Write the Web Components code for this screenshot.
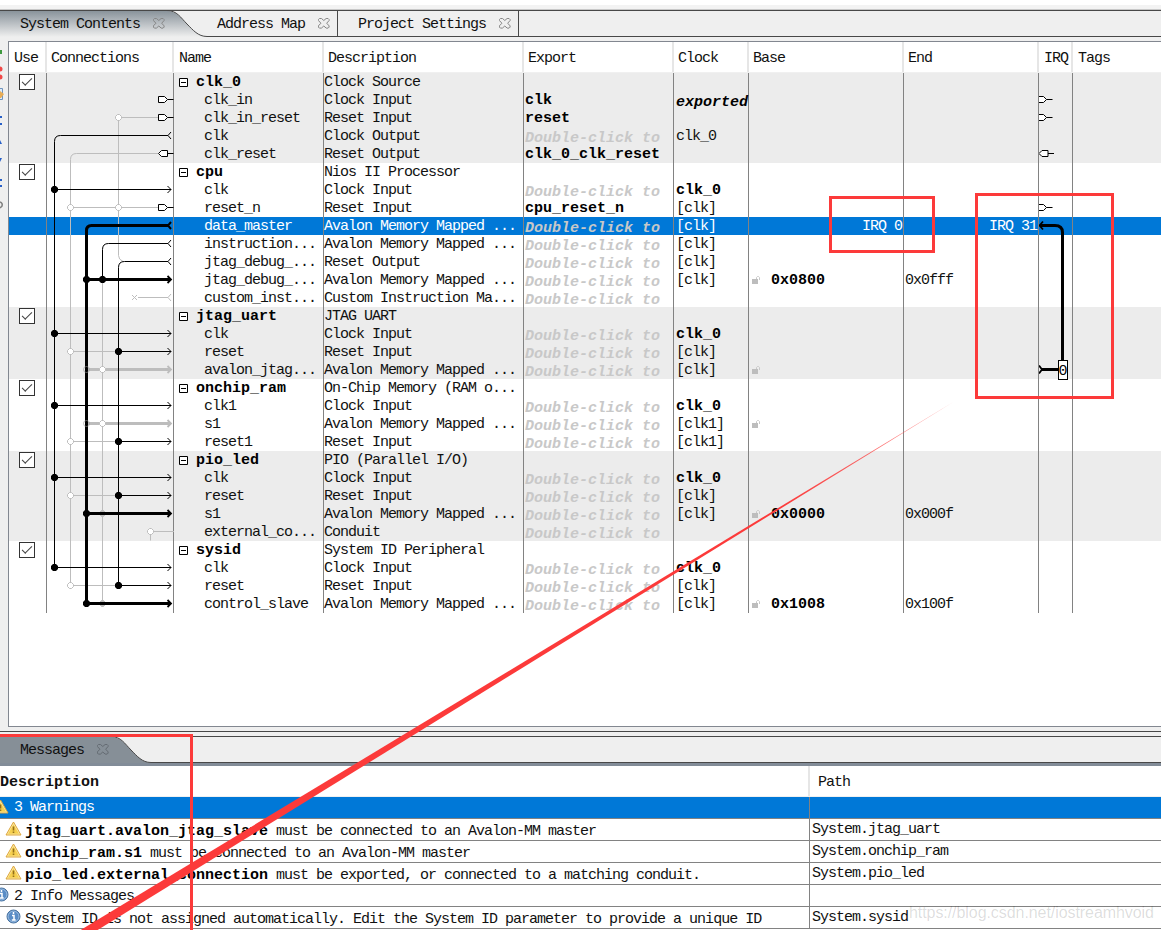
<!DOCTYPE html>
<html lang="en">
<head>
<meta charset="utf-8">
<title>System Contents</title>
<style>
    html, body {
        margin: 0;
        height: 100%;
        overflow: hidden;
        background: #fff;
    }
    body {
        font: 15px/18px "Liberation Mono", monospace;
        letter-spacing: -1px;
        color: #111;
    }
</style>
</head>
<body>
<system-app></system-app>

<script>
const closeIcon = `
    <svg class="close" width="12" height="11" viewBox="0 0 12 11" fill="none">
        <path d="M1.5.5h2l2.3 2 2.3-2h2l1 1v1L8.7 5.2l2.4 2.7v1.2l-1 1H8.2L5.8 8 3.4 10.1h-2l-1-1V7.9l2.5-2.7L.4 2.5v-1z"/>
    </svg>`;

// One view tab; the active one gets the curved right edge
class ViewTab extends HTMLElement {
    constructor() {
        super();
        this.attachShadow({ mode: 'open' });
    }

    connectedCallback() {
        const curve = this.hasAttribute('active') ? `
            <svg class="curve" width="52" height="27" viewBox="0 0 52 27">
                <defs>
                    <linearGradient id="g" x1="0" y1="0" x2="0" y2="1">
                        <stop offset="0" stop-color="var(--tab-top)"/>
                        <stop offset="1" stop-color="var(--tab-bottom)"/>
                    </linearGradient>
                </defs>
                <path d="M0 1H2C12 1 16 8 22 14S33 26.5 42 26.5V27H0z" fill="url(#g)"/>
                <path d="M0 .5H2M42 26.5H52M2 .5H52" fill="none" stroke="#484848"/>
                <path d="M2 .5C12 .5 16 8 22 14S33 26.5 42 26.5" fill="none" stroke="#484848"/>
            </svg>` : '';

        this.shadowRoot.innerHTML = `
            <style>
                :host {
                    display: flex;
                    flex: none;
                    height: 27px;
                    box-sizing: border-box;
                    border-top: 1px solid #484848;
                    border-bottom: 1px solid #484848;
                    border-right: 1px solid #484848;
                    white-space: nowrap;
                    --tab-bottom: #efefef;
                }
                :host([active]) {
                    border: 0;
                }
                .body {
                    display: flex;
                    flex: 1;
                    box-sizing: border-box;
                    padding: 5px 0 0 var(--tab-pad, 20px);
                }
                :host([active]) .body {
                    border-top: 1px solid #484848;
                    background: linear-gradient(var(--tab-top), var(--tab-bottom));
                }
                .close {
                    flex: none;
                    margin: 2px 0 0 13px;
                    stroke: var(--close, #858585);
                }
                .curve {
                    flex: none;
                }
            </style>
            <div class="body"><slot></slot>${closeIcon}</div>${curve}
        `;
    }
}
customElements.define('view-tab', ViewTab);

class TabBar extends HTMLElement {
    constructor() {
        super();
        this.attachShadow({ mode: 'open' });
        this.shadowRoot.innerHTML = `
            <style>
                :host {
                    display: flex;
                    height: 27px;
                    background: #efefef;
                    --tab-top: #89939b;
                }
                .rest {
                    flex: 1;
                    border-top: 1px solid #484848;
                    border-bottom: 1px solid #484848;
                }
            </style>
            <slot></slot><div class="rest"></div>
        `;
    }
}
customElements.define('tab-bar', TabBar);

class CheckBox extends HTMLElement {
    constructor() {
        super();
        this.attachShadow({ mode: 'open' });
        this.shadowRoot.innerHTML = `
            <style>
                :host {
                    display: flex;
                    justify-content: center;
                    flex: none;
                    width: 14px;
                    height: 14px;
                    border: 1px solid #333;
                    background: #fff;
                }
                .tick {
                    width: 9px;
                    height: 4px;
                    margin-top: 3px;
                    border: solid #444;
                    border-width: 0 0 1.5px 1.5px;
                    transform: rotate(-45deg);
                }
            </style>
            <span class="tick"></span>
        `;
    }
}
customElements.define('check-box', CheckBox);

// exp '?' = double-click placeholder
const rows = [
    { group: true, name: 'clk_0', desc: 'Clock Source' },
    { name: 'clk_in', desc: 'Clock Input', exp: 'clk', clock: 'exported' },
    { name: 'clk_in_reset', desc: 'Reset Input', exp: 'reset' },
    { name: 'clk', desc: 'Clock Output', exp: '?', clock: 'clk_0', plain: true },
    { name: 'clk_reset', desc: 'Reset Output', exp: 'clk_0_clk_reset' },
    { group: true, name: 'cpu', desc: 'Nios II Processor' },
    { name: 'clk', desc: 'Clock Input', exp: '?', clock: 'clk_0' },
    { name: 'reset_n', desc: 'Reset Input', exp: 'cpu_reset_n', clock: '[clk]' },
    { name: 'data_master', desc: 'Avalon Memory Mapped ...', exp: '?', clock: '[clk]', irq: ['IRQ 0', 'IRQ 31'], selected: true },
    { name: 'instruction...', desc: 'Avalon Memory Mapped ...', exp: '?', clock: '[clk]' },
    { name: 'jtag_debug_...', desc: 'Reset Output', exp: '?', clock: '[clk]' },
    { name: 'jtag_debug_...', desc: 'Avalon Memory Mapped ...', exp: '?', clock: '[clk]', lock: true, base: '0x0800', end: '0x0fff' },
    { name: 'custom_inst...', desc: 'Custom Instruction Ma...', exp: '?' },
    { group: true, name: 'jtag_uart', desc: 'JTAG UART' },
    { name: 'clk', desc: 'Clock Input', exp: '?', clock: 'clk_0' },
    { name: 'reset', desc: 'Reset Input', exp: '?', clock: '[clk]' },
    { name: 'avalon_jtag...', desc: 'Avalon Memory Mapped ...', exp: '?', clock: '[clk]', lock: true },
    { group: true, name: 'onchip_ram', desc: 'On-Chip Memory (RAM o...' },
    { name: 'clk1', desc: 'Clock Input', exp: '?', clock: 'clk_0' },
    { name: 's1', desc: 'Avalon Memory Mapped ...', exp: '?', clock: '[clk1]', lock: true },
    { name: 'reset1', desc: 'Reset Input', exp: '?', clock: '[clk1]' },
    { group: true, name: 'pio_led', desc: 'PIO (Parallel I/O)' },
    { name: 'clk', desc: 'Clock Input', exp: '?', clock: 'clk_0' },
    { name: 'reset', desc: 'Reset Input', exp: '?', clock: '[clk]' },
    { name: 's1', desc: 'Avalon Memory Mapped ...', exp: '?', clock: '[clk]', lock: true, base: '0x0000', end: '0x000f' },
    { name: 'external_co...', desc: 'Conduit', exp: '?' },
    { group: true, name: 'sysid', desc: 'System ID Peripheral' },
    { name: 'clk', desc: 'Clock Input', exp: '?', clock: 'clk_0' },
    { name: 'reset', desc: 'Reset Input', exp: '?', clock: '[clk]' },
    { name: 'control_slave', desc: 'Avalon Memory Mapped ...', exp: '?', clock: '[clk]', lock: true, base: '0x1008', end: '0x100f' }
];

const columns = '38px 127px 150px 200px 150px 75px 155px 135px 34px 1fr';

class ComponentRow extends HTMLElement {
    constructor() {
        super();
        this.attachShadow({ mode: 'open' });
    }

    set row(r) {
        const minus = `
            <svg class="minus" width="9" height="9" viewBox="0 0 9 9" fill="#fff" stroke="#000">
                <path d="M.5.5h8v8h-8zM2 4.5h5"/>
            </svg>`;
        const lock = r.lock ? `
            <svg class="lock" width="8" height="8" viewBox="0 0 8 8">
                <path d="M0 3h6v5H0z" fill="#bdbdbd"/>
                <path d="M4.5 3V1.5l1-1h1l1 1V4" fill="none" stroke="#c8c8c8"/>
            </svg>` : '';
        const hint = r.exp === '?';
        const exported = r.clock === 'exported';
        const bold = (r.clock === 'clk_0' && !r.plain) || exported;
        const irq = r.irq || [];

        this.shadowRoot.innerHTML = `
            <style>
                :host {
                    display: grid;
                    grid-template-columns: ${columns};
                    height: 18px;
                    white-space: pre;
                }
                :host([shade]) {
                    background: #ececec;
                }
                :host([selected]) {
                    background: #0078d7;
                    color: #fff;
                }
                div {
                    box-sizing: border-box;
                    height: 18px;
                    padding: 1px 0 0;
                    border-right: 1px solid #828282;
                    line-height: 18px;
                }
                .use {
                    display: flex;
                    padding: 1px 0 0 10px;
                }
                .last {
                    border: 0;
                }
                .name {
                    padding-left: 30px;
                }
                .group {
                    display: flex;
                    padding-left: 5px;
                }
                .minus {
                    margin: 4px 8px 0 0;
                }
                .exp {
                    padding-left: 1px;
                }
                .clk {
                    padding-left: 2px;
                }
                b {
                    letter-spacing: 0;
                    color: #000;
                }
                .late {
                    padding-top: 4px;
                    font-style: italic;
                    line-height: 16px;
                }
                .hint b {
                    color: #c8c8c8;
                }
                .base {
                    display: flex;
                }
                .lock {
                    margin: 4px 11px 0 3px;
                }
                .end {
                    padding-left: 1px;
                }
                .irq {
                    display: block;
                    padding-right: 1px;
                    text-align: right;
                }
                svg {
                    display: block;
                    flex: none;
                }
            </style>
            <div class="use">${r.group ? '<check-box></check-box>' : ''}</div>
            <div></div>
            <div class="${r.group ? 'group' : 'name'}">${r.group ? `${minus}<b>${r.name}</b>` : r.name}</div>
            <div>${r.desc}</div>
            <div class="exp ${hint ? 'late hint' : ''}">${r.exp ? `<b>${hint ? 'Double-click to' : r.exp}</b>` : ''}</div>
            <div class="clk ${exported ? 'late' : ''}">${bold ? `<b>${r.clock}</b>` : r.clock || ''}</div>
            <div class="base ${irq.length ? 'irq' : ''}">${irq[0] || ''}${lock}${r.base ? `<b>${r.base}</b>` : ''}</div>
            <div class="end ${irq.length ? 'irq' : ''}">${irq[1] || r.end || ''}</div>
            <div></div>
            <div class="last"></div>
        `;
        this.toggleAttribute('selected', !!r.selected);
    }
}
customElements.define('component-row', ComponentRow);

// Wiring drawn over the rows
const rowY = (i) => 8.5 + 18 * i;
const gray = '#bdbdbd';

const line = (x1, x2, row, color = '#000', width = 1) =>
    `<path d="M${x1} ${rowY(row)}H${x2}" stroke="${color}" stroke-width="${width}" fill="none"/>`;

const arrow = (x, row, color = '#000', width = 1) =>
    line(x, width > 1 ? 170 : 171, row, color, width) +
    `<path d="M167.5 ${rowY(row) - 3.5}l3.5 3.5-3.5 3.5" stroke="${color}" stroke-width="${width > 1 ? 1.8 : 1}" fill="none"/>`;

const fork = (row, color = '#000', width = 1) =>
    `<path d="M171 ${rowY(row) - 3.5}l-3 3.5 3 3.5" stroke="${color}" stroke-width="${width}" fill="none"/>`;

const dot = (x, row, color = '#000') => {
    const y = rowY(row);
    return `<path d="M${x - 1.5} ${y - 3.5}h3l2 2v3l-2 2h-3l-2-2v-3z" fill="${color}"/>`;
};

const ring = (x, row, fill = '#fff') =>
    `<path d="M${x - 1} ${rowY(row) - 3}h2l2 2v2l-2 2h-2l-2-2v-2z" fill="${fill}" stroke="${gray}"/>`;

const input = (x, row) =>
    `<path d="M${x + .5} ${rowY(row) - 3}h6l3 3-3 3h-6zM${x + 9.5} ${rowY(row)}h6" fill="#fff" stroke="#000"/>`;

const output = (x, row) =>
    `<path d="M${x + 9.5} ${rowY(row) - 3}h-6l-3 3 3 3h6zM${x + 9.5} ${rowY(row)}h6" fill="#fff" stroke="#000"/>`;

const drawWires = () => {
    let s = '';
    // gray nets first
    s += `<path d="M158 ${rowY(4)}H76.5q-6 0-6 6V${rowY(28)}" fill="none" stroke="${gray}"/>`;
    s += `<path d="M118.5 ${rowY(2)}V${rowY(10) - 6}q0 4 4.5 6" fill="none" stroke="${gray}"/>`;
    s += `<path d="M102.5 ${rowY(11)}V${rowY(29)}" stroke="${gray}"/>`;
    s += line(118, 158, 2, gray) + line(70, 158, 7, gray);
    [15, 20, 23, 28].forEach((r) => { s += line(70, 118, r, gray); });
    [16, 19].forEach((r) => { s += arrow(86, r, gray, 3); });
    s += line(138, 168, 12, gray) + fork(12, gray);
    s += `<path d="M132 ${rowY(12) - 2.5}l5 5m0-5l-5 5" stroke="${gray}"/>`;
    s += `<path d="M150.5 ${rowY(26) - 9}V${rowY(25)}H174" fill="none" stroke="${gray}"/>`;

    // clock net
    s += `<path d="M168 ${rowY(3)}H60.5q-6 0-6 6V${rowY(27)}" fill="none" stroke="#000"/>` + fork(3);
    [6, 14, 18, 22, 27].forEach((r) => { s += arrow(54, r) + dot(54.5, r); });

    // data master
    s += `<path d="M168 ${rowY(8)}H91.5q-5 0-5 5V${rowY(29)}" fill="none" stroke="#000" stroke-width="3"/>` + fork(8, '#000', 2);
    [16, 19].forEach((r) => { s += `<circle cx="86.5" cy="${rowY(r)}" r="3" fill="none" stroke="#999" stroke-opacity=".6"/>`; });
    [11, 24, 29].forEach((r) => { s += dot(86.5, r); });

    // instruction master
    s += `<path d="M168 ${rowY(9)}H108.5q-6 0-6 6V${rowY(11)}" fill="none" stroke="#000"/>` + fork(9);
    [24, 29].forEach((r) => { s += ring(102.5, r, gray); });
    [11, 24, 29].forEach((r) => { s += arrow(86, r, '#000', 3); });
    s += dot(102.5, 11) + ring(102.5, 16) + ring(102.5, 19);

    // reset net
    s += `<path d="M168 ${rowY(10)}H124.5q-6 0-6 6V${rowY(28)}" fill="none" stroke="#000"/>` + fork(10);
    [15, 20, 23, 28].forEach((r) => { s += arrow(118, r) + dot(118.5, r) + ring(70.5, r); });
    s += ring(118.5, 2) + ring(70.5, 7) + ring(118.5, 7) + ring(150.5, 25);

    s += input(158, 1) + input(158, 2) + output(158, 4) + input(158, 7);
    return s;
};

const drawIrq = () => {
    const top = rowY(8);
    const bottom = rowY(16);
    return input(1037, 1) + input(1037, 2) + output(1038.5, 4) + input(1037, 7) + `
        <path d="M1040 ${top}H1055q7.5 0 7.5 7V${bottom - 9}" fill="none" stroke="#000" stroke-width="3"/>
        <path d="M1043 ${top - 4}l-3.5 4 3.5 4" fill="none" stroke="#000" stroke-width="1.8"/>
        <path d="M1042 ${bottom}h16" stroke="#000" stroke-width="3"/>
        <path d="M1039 ${bottom - 4}l3 4-3 4" fill="none" stroke="#000" stroke-width="1.8"/>
        <rect x="1058.5" y="${bottom - 9}" width="9" height="19" fill="#fff" stroke="#000"/>
        <text x="1058.5" y="${bottom + 5.5}" font-size="15" fill="#000">0</text>`;
};

class ConnectionWires extends HTMLElement {
    constructor() {
        super();
        this.attachShadow({ mode: 'open' });
        this.shadowRoot.innerHTML = `
            <style>
                :host {
                    display: block;
                }
                svg {
                    display: block;
                }
            </style>
            <svg width="1152" height="540" viewBox="9 0 1152 540">
                <g>${drawWires()}</g>
                <svg x="1039" y="0" width="60" height="540" viewBox="1039 0 60 540">${drawIrq()}</svg>
            </svg>
        `;
    }
}
customElements.define('connection-wires', ConnectionWires);

class ComponentTable extends HTMLElement {
    constructor() {
        super();
        this.attachShadow({ mode: 'open' });
        const heads = ['Use', 'Connections', 'Name', 'Description', 'Export', 'Clock', 'Base', 'End', 'IRQ', 'Tags'];
        this.shadowRoot.innerHTML = `
            <style>
                :host {
                    display: block;
                    flex: 1;
                    border: 1px solid #828790;
                    border-right: 0;
                    background: #fff;
                }
                header {
                    display: grid;
                    grid-template-columns: ${columns};
                    height: 31px;
                    box-sizing: border-box;
                    border-bottom: 1px solid #f0f0f0;
                }
                header span {
                    padding: 8px 0 0 4px;
                    border-right: 2px solid #e6e6e6;
                    white-space: nowrap;
                }
                header .wide {
                    padding-left: 5px;
                }
                header span:last-child {
                    border: 0;
                }
                .rows {
                    position: relative;
                }
                connection-wires {
                    position: absolute;
                    inset: 0;
                }
            </style>
            <header>${heads.map((h) => `<span class="${['Use', 'Name', 'IRQ', 'Tags'].includes(h) ? 'wide' : ''}">${h}</span>`).join('')}</header>
            <div class="rows"></div>
        `;

        const body = this.shadowRoot.querySelector('.rows');
        let group = 0;
        rows.forEach((r) => {
            if (r.group) group++;
            const el = document.createElement('component-row');
            el.row = r;
            el.toggleAttribute('shade', group % 2 === 1);
            body.append(el);
        });
        body.append(document.createElement('connection-wires'));
    }
}
customElements.define('component-table', ComponentTable);

// Clipped left toolbar, only the icons' right edges are visible
class SideStrip extends HTMLElement {
    constructor() {
        super();
        this.attachShadow({ mode: 'open' });
        this.shadowRoot.innerHTML = `
            <style>
                :host {
                    display: block;
                    width: 8px;
                }
            </style>
            <svg width="8" height="190" viewBox="0 37 8 190">
                <path d="M0 50h2v4H0z" fill="#3f9a3f"/>
                <circle cx="0" cy="69" r="2.5" fill="#f04848"/>
                <circle cx="0" cy="77" r="2.5" fill="#f04848"/>
                <path d="M0 88.5h2.5v11H0" fill="#dcebfa" stroke="#6f93bd"/>
                <path d="M0 91l4 3-3 4H0z" fill="#e8ac55"/>
                <path d="M0 117h2M0 124h2M0 180h2M0 186h2" stroke="#2860c8" stroke-width="2"/>
                <path d="M0 140l2 4H0zM0 158h2l-2 4z" fill="#2860c8"/>
                <path d="M0 202q3 1 2 4l-2 2" fill="none" stroke="#808080" stroke-width="1.5"/>
            </svg>
        `;
    }
}
customElements.define('side-strip', SideStrip);

const icons = {
    warning: `
        <svg width="17" height="15" viewBox="0 0 17 15">
            <path d="M8.5 1L16 14H1z" fill="#fbe9a6" stroke="#dda63c" stroke-linejoin="round"/>
            <path d="M8.5 3.5L14 12.8H3z" fill="#f6cf4e"/>
            <path d="M8.5 5.5v4M8.5 10.5v1.5" stroke="#94701c" stroke-width="1.6"/>
        </svg>`,
    info: `
        <svg width="15" height="15" viewBox="0 0 15 15">
            <circle cx="7.5" cy="7.5" r="6.5" fill="#5a8dc6" stroke="#47719f"/>
            <circle cx="7.5" cy="7.5" r="5.4" fill="none" stroke="#a9c6e5" stroke-width=".8"/>
            <path d="M7.5 3v2M6 6.5h2V11M5.8 11h3.9" fill="none" stroke="#fff" stroke-width="1.5"/>
        </svg>`
};

class MessageRow extends HTMLElement {
    constructor() {
        super();
        this.attachShadow({ mode: 'open' });
    }

    connectedCallback() {
        this.shadowRoot.innerHTML = `
            <style>
                :host {
                    display: grid;
                    grid-template-columns: 810px 1fr;
                    height: 22px;
                    box-sizing: border-box;
                    border-bottom: 1px solid #828282;
                    white-space: pre;
                }
                :host([selected]) {
                    background: #0078d7;
                    color: #fff;
                }
                .text {
                    display: flex;
                    padding: 4px 0 0 25px;
                    border-right: 1px solid #828282;
                }
                :host([top]) .text {
                    padding: 2px 0 0 14px;
                }
                :host([top][icon="info"]) .text {
                    padding-top: 3px;
                }
                .path {
                    padding: 2px 0 0 2px;
                }
                svg {
                    flex: none;
                    margin: -2px 3px 0 -20px;
                }
                :host([icon="info"]) svg {
                    margin: -2px 4px 0 -19px;
                }
                :host([top]) svg {
                    margin: 0 5px 0 -22px;
                }
                :host([top][icon="info"]) svg {
                    margin: -1px 5px 0 -20px;
                }
                ::slotted(b) {
                    letter-spacing: 0;
                    color: #000;
                }
            </style>
            <div class="text">${icons[this.getAttribute('icon')]}<span><slot></slot></span></div>
            <div class="path"><slot name="path"></slot></div>
        `;
    }
}
customElements.define('message-row', MessageRow);

class MessageList extends HTMLElement {
    constructor() {
        super();
        this.attachShadow({ mode: 'open' });
        this.shadowRoot.innerHTML = `
            <style>
                :host {
                    display: block;
                    flex: none;
                    height: 167px;
                    border-top: 3px solid #828c98;
                    background: #fff;
                    overflow: hidden;
                }
                header {
                    display: grid;
                    grid-template-columns: 810px 1fr;
                    height: 31px;
                    box-sizing: border-box;
                    border-bottom: 1px solid #f0f0f0;
                }
                header span {
                    padding: 8px 0 0 8px;
                }
                header .first {
                    padding-left: 0;
                    border-right: 2px solid #e6e6e6;
                    font-weight: bold;
                    letter-spacing: 0;
                }
            </style>
            <header><span class="first">Description</span><span>Path</span></header>
            <slot></slot>
        `;
    }
}
customElements.define('message-list', MessageList);

// Red marks and the faint site address on top of everything
class MarkLayer extends HTMLElement {
    constructor() {
        super();
        this.attachShadow({ mode: 'open' });
        this.shadowRoot.innerHTML = `
            <style>
                :host {
                    display: block;
                    position: absolute;
                    inset: 0;
                    letter-spacing: 0;
                }
            </style>
            <svg width="1161" height="930" viewBox="0 0 1161 930">
                <defs>
                    <linearGradient id="fade" gradientUnits="userSpaceOnUse" x1="780" y1="508" x2="955" y2="401">
                        <stop offset="0" stop-color="#fc3a3a"/>
                        <stop offset="1" stop-color="#fc3a3a" stop-opacity=".5"/>
                    </linearGradient>
                </defs>
                <text x="909" y="918" font-family="Liberation Sans, sans-serif" font-size="16"
                    textLength="245" fill="#000" fill-opacity=".14">https://blog.csdn.net/iostreamhvoid</text>
                <g fill="none" stroke="#fc3a3a" stroke-width="3">
                    <rect x="830.5" y="197.5" width="103" height="54"/>
                    <rect x="976.5" y="194.5" width="136" height="203"/>
                    <path d="M0 735.5H191.5V930"/>
                </g>
                <path d="M955 401L79 931H96z" fill="url(#fade)"/>
            </svg>
        `;
    }
}
customElements.define('mark-layer', MarkLayer);

class SystemApp extends HTMLElement {
    constructor() {
        super();
        this.attachShadow({ mode: 'open' });
        this.shadowRoot.innerHTML = `
            <style>
                :host {
                    display: flex;
                    flex-direction: column;
                    position: relative;
                    width: 1161px;
                    height: 930px;
                    overflow: hidden;
                }
                .top {
                    height: 10px;
                    flex: none;
                    box-sizing: border-box;
                    border-top: 5px solid #fff;
                    border-bottom: 1px solid #c8c8c8;
                    background: #f3f3f3;
                }
                tab-bar {
                    flex: none;
                }
                .main {
                    display: flex;
                    flex: none;
                    box-sizing: border-box;
                    height: 694px;
                    padding-bottom: 4px;
                    background: #efefef;
                }
                component-table {
                    margin-top: 4px;
                }
                .split {
                    flex: none;
                    height: 4px;
                    border-top: 1px solid #484848;
                    background: #efefef;
                }
                .messages {
                    --tab-top: #868f97;
                    --close: #646b72;
                }
                .first { width: 216px; }
                .second { width: 122px; --tab-pad: 1px; }
                .third { width: 181px; }
                .only { width: 159px; }
                .solid { --tab-bottom: #868f97; }
            </style>
            <div class="top"></div>
            <tab-bar>
                <view-tab class="first" active>System Contents</view-tab>
                <view-tab class="second">Address Map</view-tab>
                <view-tab class="third">Project Settings</view-tab>
            </tab-bar>
            <div class="main">
                <side-strip></side-strip>
                <component-table></component-table>
            </div>
            <div class="split"></div>
            <tab-bar class="messages">
                <view-tab class="only solid" active>Messages</view-tab>
            </tab-bar>
            <message-list>
                <message-row icon="warning" top selected>3 Warnings</message-row>
                <message-row icon="warning"><b>jtag_uart.avalon_jtag_slave</b> must be connected to an Avalon-MM master<span slot="path">System.jtag_uart</span></message-row>
                <message-row icon="warning"><b>onchip_ram.s1</b> must be connected to an Avalon-MM master<span slot="path">System.onchip_ram</span></message-row>
                <message-row icon="warning"><b>pio_led.external_connection</b> must be exported, or connected to a matching conduit.<span slot="path">System.pio_led</span></message-row>
                <message-row icon="info" top>2 Info Messages</message-row>
                <message-row icon="info">System ID is not assigned automatically. Edit the System ID parameter to provide a unique ID<span slot="path">System.sysid</span></message-row>
            </message-list>
            <mark-layer></mark-layer>
        `;
    }
}
customElements.define('system-app', SystemApp);
</script>
</body>
</html>
